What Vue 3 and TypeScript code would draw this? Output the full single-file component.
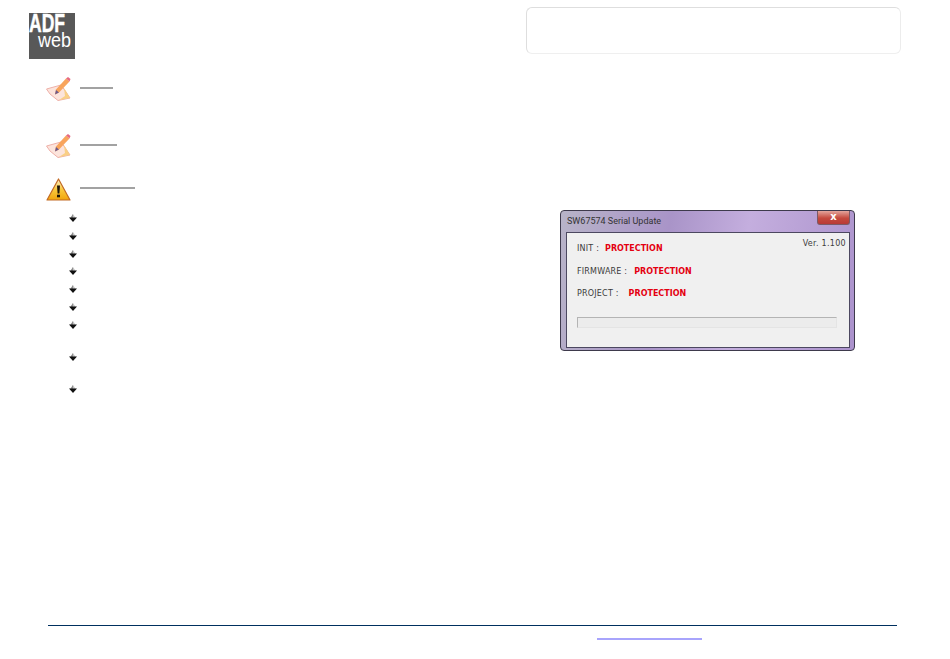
<script setup lang="ts">
const bullets: { id: number; gap: boolean }[] = [
  { id: 1, gap: false },
  { id: 2, gap: false },
  { id: 3, gap: false },
  { id: 4, gap: false },
  { id: 5, gap: false },
  { id: 6, gap: false },
  { id: 7, gap: true },
  { id: 8, gap: true },
  { id: 9, gap: false },
]
const rows = [
  { label: 'INIT :', gap: 'g-init' },
  { label: 'FIRMWARE :', gap: 'g-fw' },
  { label: 'PROJECT :', gap: 'g-prj' },
]
</script>

<template>
  <div class="page">
    <div class="main">
      <section class="left">
        <svg class="logo" width="46" height="46" viewBox="0 0 46 46">
          <rect width="46" height="46" fill="#585858" />
          <text x="0" y="19" class="adf" textLength="36" lengthAdjust="spacingAndGlyphs">ADF</text>
          <text x="9" y="34" class="web" textLength="33" lengthAdjust="spacingAndGlyphs">web</text>
        </svg>

        <div class="head note-one">
          <svg class="icon" width="25" height="25" viewBox="0 0 25 25">
            <path d="M0.5 12 15 8 20 15 24 21 12 23.500 4 17Z" fill="#fce4dc" stroke="#eeb0a8" stroke-width="1" />
            <path d="M18 11 24 21 13 23 19 19Z" fill="#f9cf85" />
            <path d="M9 17.500 10 12.500 20 1.500 23.500 4.500 13 15.500Z" fill="#f8a45c" />
            <path d="M20 1.500 22 0 24.500 2 23.500 4.500Z" fill="#e66a80" />
            <path d="M9 17.500 10 13 13 15.500Z" fill="#6e5a8c" />
          </svg>
          <span class="rule rule-note"></span>
        </div>

        <div class="head note-two">
          <svg class="icon" width="25" height="25" viewBox="0 0 25 25">
            <path d="M0.5 12 15 8 20 15 24 21 12 23.500 4 17Z" fill="#fce4dc" stroke="#eeb0a8" stroke-width="1" />
            <path d="M18 11 24 21 13 23 19 19Z" fill="#f9cf85" />
            <path d="M9 17.500 10 12.500 20 1.500 23.500 4.500 13 15.500Z" fill="#f8a45c" />
            <path d="M20 1.500 22 0 24.500 2 23.500 4.500Z" fill="#e66a80" />
            <path d="M9 17.500 10 13 13 15.500Z" fill="#6e5a8c" />
          </svg>
          <span class="rule rule-note-long"></span>
        </div>

        <div class="head warn">
          <svg class="icon" width="25" height="23" viewBox="0 0 25 23">
            <defs>
              <linearGradient id="warnFill" x1="0" y1="0" x2="0" y2="1">
                <stop offset="0" stop-color="#fdf0cc" />
                <stop offset="0.5" stop-color="#f9c93e" />
                <stop offset="1" stop-color="#f2a40c" />
              </linearGradient>
            </defs>
            <path d="M12.500 1 24 22H1Z" fill="url(#warnFill)" stroke="#c26a24" stroke-width="1.200" stroke-linejoin="round" />
            <path d="M11 7.500h3l-0.600 8h-1.800Z" fill="#1c1408" />
            <rect x="11" y="16.700" width="3" height="2.600" fill="#1c1408" />
          </svg>
          <span class="rule rule-warn"></span>
        </div>

        <ul class="bullets">
          <li v-for="b in bullets" :key="b.id" :class="{ tall: b.gap }">
            <svg width="8" height="8" viewBox="0 0 8 8">
              <path d="M4 0 7 4.500H1Z" fill="#c4c4c4" />
              <path d="M4 0 4 4.500H1Z" fill="#8c8c8c" />
              <path d="M0 3.500H8L4 8Z" fill="#111" />
            </svg>
          </li>
        </ul>
      </section>

      <section class="right">
        <div class="titlebox"></div>

        <div class="dialog">
          <div class="titlebar">
            <span class="wintitle">SW67574 Serial Update</span>
            <span class="close">x</span>
          </div>
          <div class="client">
            <div class="ver">Ver. 1.100</div>
            <div v-for="r in rows" :key="r.label" class="status">
              <span class="lbl">{{ r.label }}</span><b :class="r.gap">PROTECTION</b>
            </div>
            <div class="progress"></div>
          </div>
        </div>
      </section>
    </div>

    <footer class="foot">
      <div class="footline"></div>
      <div class="link"></div>
    </footer>
  </div>
</template>

<style>
html, body { margin: 0; background: #fff; }
</style>

<style scoped>
.page {
  width: 950px;
  height: 659px;
  display: flex;
  flex-direction: column;
  background: #fff;
  overflow: hidden;
  font-family: "DejaVu Sans", sans-serif;
}
.main {
  flex: 1;
  display: flex;
  min-height: 0;
}
.left {
  width: 497px;
  padding: 13px 0 0 29px;
  display: flex;
  flex-direction: column;
  align-items: flex-start;
}
.logo { display: block; overflow: visible; }
.adf {
  font: 700 26px "Liberation Sans", sans-serif;
  fill: #fff;
  stroke: #fff;
  stroke-width: 0.5px;
}
.web {
  font: 400 20px "Liberation Sans", sans-serif;
  fill: #fff;
}
.head {
  display: flex;
  align-items: flex-start;
  margin-left: 17px;
}
.icon { display: block; flex: none; }
.note-one { margin-top: 18px; }
.note-two { margin-top: 32px; }
.warn { margin-top: 19px; }
.rule {
  display: block;
  height: 2px;
  margin-left: 9px;
  background: #a2a2a2;
}
.head .rule { margin-top: 10px; }
.warn .rule { margin-top: 9px; }
.rule-note { width: 33px; }
.rule-note-long { width: 37px; }
.rule-warn { width: 55px; }
.bullets {
  list-style: none;
  margin: 13px 0 0 40px;
  padding: 0;
}
.bullets li {
  height: 17.800px;
}
.bullets li.tall { height: 32px; }
.bullets svg { display: block; }

.right {
  flex: 1;
  display: flex;
  flex-direction: column;
  align-items: flex-start;
  padding-top: 7px;
}
.titlebox {
  width: 373px;
  height: 45px;
  border: 1px solid #dedede;
  border-bottom-color: #efefef;
  border-right-color: #ececec;
  border-radius: 6px;
}
.dialog {
  width: 295px;
  height: 141px;
  margin: 156px 0 0 34px;
  box-sizing: border-box;
  display: flex;
  flex-direction: column;
  padding: 0 4px 2px 5px;
  border: 1px solid #3e3a4c;
  border-radius: 4px;
  background: linear-gradient(100deg, #b8b4c8 0%, #a994c8 35%, #c4aede 60%, #ab92cc 100%);
}
.titlebar {
  height: 21px;
  flex: none;
  display: flex;
  justify-content: space-between;
  align-items: flex-start;
}
.wintitle {
  font: 400 9px/20px Roboto, sans-serif;
  color: #333;
  margin-left: 1px;
}
.close {
  width: 33px;
  height: 14px;
  font: 700 10px/12px "DejaVu Sans", sans-serif;
  text-align: center;
  color: #fff;
  background: linear-gradient(#e4a59c, #c54a3e 55%, #b83a36);
  border: 1px solid #7c5a66;
  border-top: 0;
  border-radius: 0 0 3px 3px;
  box-sizing: border-box;
}
.client {
  flex: 1;
  background: #f0f0f0;
  border: 1px solid #4c4860;
  padding: 6px 3px 0 10px;
  display: flex;
  flex-direction: column;
}
.ver {
  align-self: flex-end;
  font-size: 8px;
  line-height: 10px;
  letter-spacing: 0.3px;
  color: #3c3c3c;
  margin-bottom: -6px;
}
.status {
  height: 22.500px;
  font-size: 8px;
  line-height: 12px;
  color: #3c3c3c;
  white-space: nowrap;
}
.lbl { letter-spacing: 0.2px; }
.status b { color: #e40010; font-weight: 700; }
.g-init { margin-left: 6px; }
.g-fw { margin-left: 7px; }
.g-prj { margin-left: 10px; }
.progress {
  width: 260px;
  height: 11px;
  margin-top: 6px;
  box-sizing: border-box;
  background: #ececec;
  border: 1px solid #b4b4b4;
  border-right-color: #e4e4e4;
  border-bottom-color: #e4e4e4;
}

.foot {
  height: 34px;
  flex: none;
  display: flex;
  flex-direction: column;
}
.footline {
  width: 849px;
  height: 1px;
  margin-left: 48px;
  background: #00305f;
}
.link {
  width: 105px;
  height: 2px;
  margin: 12px 0 0 597px;
  background: #a8a4fc;
}
</style>
